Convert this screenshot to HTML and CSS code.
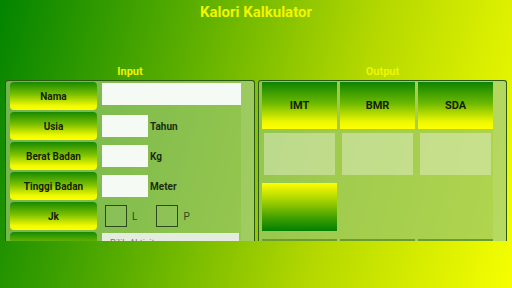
FILE: index.html
```html
<!DOCTYPE html>
<html lang="id">
<head>
  <meta charset="UTF-8">
  <meta name="viewport" content="width=device-width, initial-scale=1.0">
  <title>Kalori Kalkulator</title>
  <link rel="stylesheet" href="styles.css">
</head>
<body>
  <h1 class="app-title">Kalori Kalkulator</h1>

  <div class="columns">
    <div class="column">
      <h2 class="column-title">Input</h2>
      <div class="panel">
        <div class="form-list">
          <div class="form-row">
            <div class="field-label">Nama</div>
            <div class="text-box wide"></div>
          </div>
          <div class="form-row">
            <div class="field-label">Usia</div>
            <div class="text-box"></div>
            <span class="unit">Tahun</span>
          </div>
          <div class="form-row">
            <div class="field-label">Berat Badan</div>
            <div class="text-box"></div>
            <span class="unit">Kg</span>
          </div>
          <div class="form-row">
            <div class="field-label">Tinggi Badan</div>
            <div class="text-box"></div>
            <span class="unit">Meter</span>
          </div>
          <div class="form-row">
            <div class="field-label">Jk</div>
            <div class="check-group">
              <label class="check"><span class="check-box"></span>L</label>
              <label class="check"><span class="check-box"></span>P</label>
            </div>
          </div>
          <div class="form-row">
            <div class="field-label">Aktivitas</div>
            <div class="spinner">Pilih Aktivitas</div>
          </div>
        </div>
        <div class="panel-edge"></div>
      </div>
    </div>

    <div class="column">
      <h2 class="column-title">Output</h2>
      <div class="panel">
        <div class="result-grid">
          <div class="head-cell">IMT</div>
          <div class="head-cell">BMR</div>
          <div class="head-cell">SDA</div>

          <div class="value-cell"><div class="value-box"></div></div>
          <div class="value-cell"><div class="value-box"></div></div>
          <div class="value-cell"><div class="value-box"></div></div>

          <div class="action-cell"><div class="action-btn"></div></div>
          <div class="action-cell"></div>
          <div class="action-cell"></div>

          <div class="foot-cell"></div>
          <div class="foot-cell"></div>
          <div class="foot-cell"></div>
        </div>
        <div class="panel-edge"></div>
      </div>
    </div>
  </div>
</body>
</html>
```

FILE: styles.css
```css
* {
  margin: 0;
  padding: 0;
  box-sizing: border-box;
}

body {
  font-family: Roboto, 'Liberation Sans', Arial, sans-serif;
  background: linear-gradient(105deg, #028400 0%, #5fb000 35%, #b4d800 65%, #f6ff00 100%);
  width: 512px;
  height: 288px;
  overflow: hidden;
}

.app-title {
  font-size: 15px;
  font-weight: bold;
  color: #f0f500;
  text-align: center;
  padding-top: 3px;
  height: 64px;
}

.columns {
  display: flex;
  gap: 3px;
  padding: 0 5px;
}

.column {
  flex: 1;
}

.column-title {
  font-size: 11px;
  font-weight: bold;
  color: #eef500;
  text-align: center;
  height: 16px;
  line-height: 16px;
}

.panel {
  position: relative;
  height: 161px;
  border: 1px solid #2c5a10;
  border-bottom: none;
  border-radius: 3px 3px 0 0;
  background: rgba(153, 198, 108, 0.72);
  overflow: hidden;
  display: flex;
}

.panel-edge {
  width: 13px;
  flex-shrink: 0;
  background: rgba(220, 240, 200, 0.15);
  margin-left: auto;
}

/* input side */
.form-list {
  display: flex;
  flex-direction: column;
  gap: 2px;
  padding: 1px 0 0 4px;
}

.form-row {
  display: flex;
  align-items: center;
  height: 28px;
}

.field-label {
  width: 87px;
  height: 28px;
  flex-shrink: 0;
  border-radius: 4px;
  background: linear-gradient(#178a00 0%, #7cc000 45%, #f2fa00 85%, #ffff00 100%);
  color: #142200;
  font-size: 10px;
  font-weight: bold;
  display: flex;
  align-items: center;
  justify-content: center;
}

.text-box {
  margin-left: 5px;
  width: 46px;
  height: 22px;
  background: #f6faf4;
}

.text-box.wide {
  width: 139px;
  align-self: flex-start;
  margin-top: 1px;
}

.unit {
  margin-left: 2px;
  font-size: 10px;
  font-weight: bold;
  color: #1c2c10;
}

.check-group {
  display: flex;
  gap: 19px;
  margin-left: 8px;
}

.check {
  display: flex;
  align-items: center;
  gap: 5px;
  font-size: 10px;
  color: #2c4a1c;
}

.check-box {
  width: 22px;
  height: 22px;
  border: 1px solid #2c4a1c;
  background: rgba(150, 200, 110, 0.3);
}

.spinner {
  margin-left: 5px;
  width: 137px;
  height: 22px;
  align-self: flex-start;
  margin-top: 1px;
  background: #e4ece0;
  color: #707a70;
  font-size: 9px;
  padding: 5px 0 0 8px;
}

/* output side */
.result-grid {
  display: grid;
  grid-template-columns: repeat(3, 75px);
  grid-template-rows: 47px 46px 52px 20px;
  column-gap: 3px;
  row-gap: 2px;
  padding: 1px 0 0 3px;
}

.head-cell {
  background: linear-gradient(#0e8400 0%, #6cb800 45%, #eef800 85%, #ffff00 100%);
  color: #142200;
  font-size: 11px;
  font-weight: bold;
  display: flex;
  align-items: center;
  justify-content: center;
}

.value-cell {
  padding: 2px;
}

.value-box {
  height: 100%;
  background: rgba(225, 238, 200, 0.5);
}

.action-cell {
  padding-top: 4px;
}

.action-btn {
  height: 48px;
  background: linear-gradient(#ffff00 0%, #a8d400 35%, #3a9c00 75%, #008000 100%);
}

.foot-cell {
  margin-top: 6px;
  border-top: 2px solid #6a9c30;
}
```
